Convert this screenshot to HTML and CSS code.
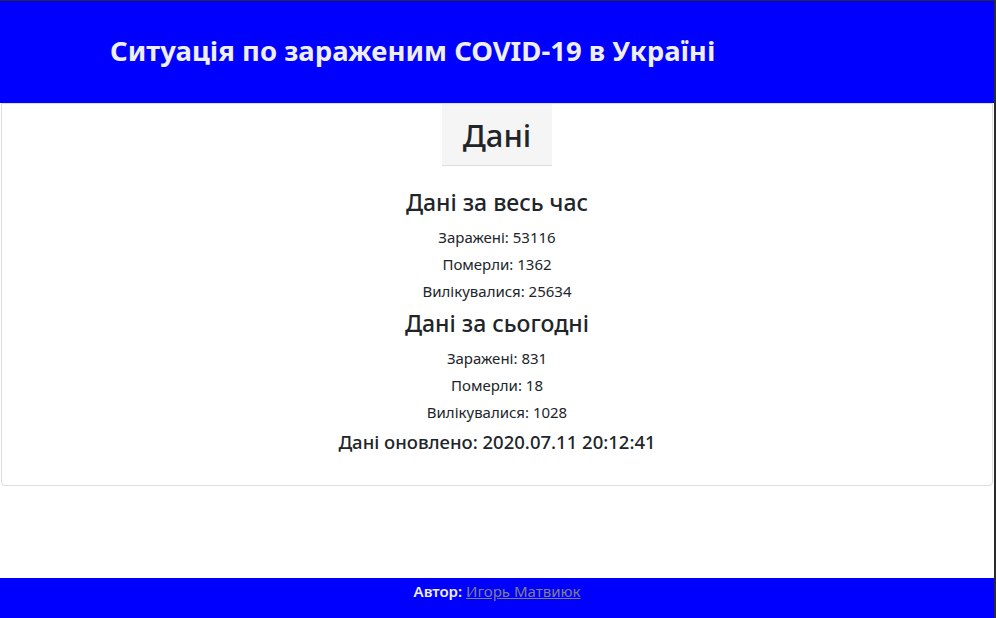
FILE: index.html
```html
<!DOCTYPE html>
<html lang="uk">
<head>
<meta charset="utf-8">
<title>COVID-19 в Україні</title>
<link rel="stylesheet" href="styles.css">
</head>
<body>
<div class="frame">
  <header class="top">
    <h1 class="title">Ситуація по зараженим COVID-19 в Україні</h1>
  </header>
  <main class="card">
    <h2 class="card-title">Дані</h2>
    <h4 class="section">Дані за весь час</h4>
    <div class="stats">
      <p>Заражені: 53116</p>
      <p>Померли: 1362</p>
      <p>Вилікувалися: 25634</p>
    </div>
    <h4 class="section">Дані за сьогодні</h4>
    <div class="stats">
      <p>Заражені: 831</p>
      <p>Померли: 18</p>
      <p>Вилікувалися: 1028</p>
    </div>
    <h5 class="updated">Дані оновлено: 2020.07.11 20:12:41</h5>
  </main>
  <div class="spacer"></div>
  <footer class="bottom">
    <span class="author">Автор:</span> <a href="#" class="link">Игорь Матвиюк</a>
  </footer>
</div>
</body>
</html>
```
FILE: styles.css
```css
html, body {
  margin: 0;
  padding: 0;
  height: 100%;
}
body {
  font-family: "Noto Sans", "Open Sans", sans-serif;
  color: #212529;
  background: #fff;
}
.frame {
  box-sizing: border-box;
  height: 618px;
  border-top: 1px solid #2b2b2b;
  border-right: 2px solid #2b2b2b;
  display: flex;
  flex-direction: column;
}
.top {
  background: #0000ff;
  height: 102px;
  flex: none;
  display: flex;
  align-items: center;
  padding-left: 110px;
}
.title {
  margin: 0;
  color: #eeeeee;
  font-size: 27.5px;
  font-weight: 700;
  line-height: 1.2;
  position: relative;
  top: -2px;
}
.card {
  flex: none;
  margin: 0 1px;
  border: 1px solid #dddddd;
  border-radius: 0 0 4px 4px;
  height: 383px;
  box-sizing: border-box;
  display: flex;
  flex-direction: column;
  align-items: center;
  text-align: center;
}
.card-title {
  margin: 0;
  padding: 0 21px;
  height: 62px;
  box-sizing: border-box;
  background: #f5f5f5;
  border-bottom: 1px solid #dddddd;
  font-size: 31px;
  font-weight: 500;
  line-height: 62px;
}
.section {
  margin: 19px 0 0;
  font-size: 23px;
  font-weight: 500;
  line-height: 34px;
}
.stats {
  margin: 5px 0 1px;
}
.stats p {
  margin: 0;
  font-size: 15px;
  line-height: 27px;
}
.stats + .section {
  margin-top: 0;
}
.updated {
  margin: 0;
  font-size: 18.5px;
  font-weight: 500;
  line-height: 30px;
}
.spacer {
  flex: 1;
}
.bottom {
  flex: none;
  background: #0000ff;
  height: 40px;
  text-align: center;
  font-size: 15px;
  line-height: 26px;
  color: #eeeeee;
}
.author {
  font-weight: 600;
}
.link {
  color: #808080;
}
```
